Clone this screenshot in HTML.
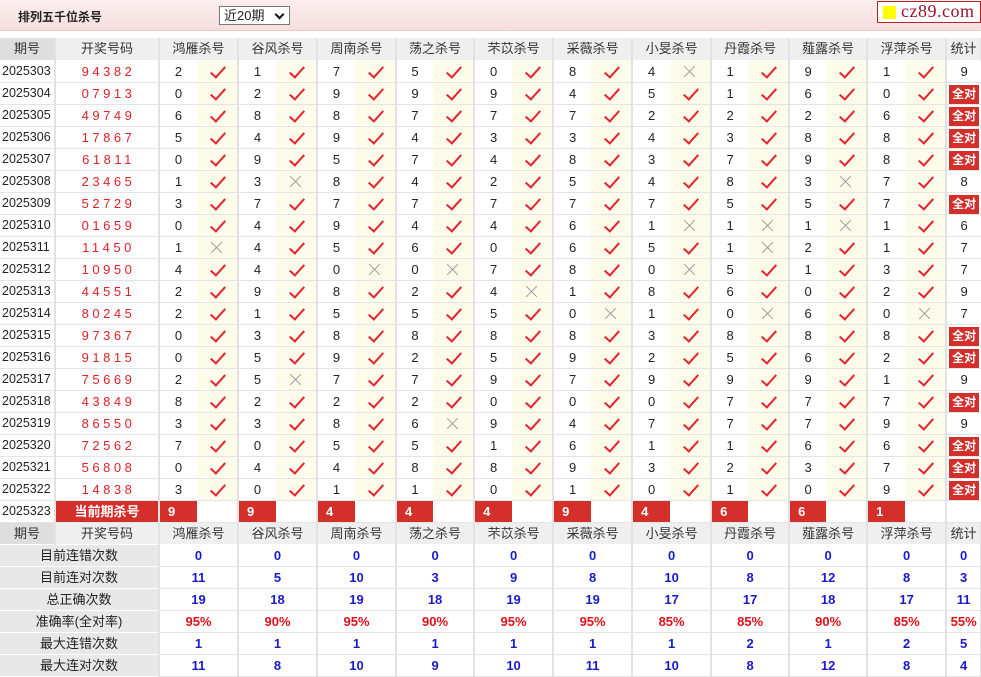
<!DOCTYPE html>
<html><head><meta charset="utf-8">
<style>
*{margin:0;padding:0;box-sizing:border-box}
body{width:981px;height:677px;background:#fff;font-family:"Liberation Sans","Noto Sans CJK SC",sans-serif;font-size:13px;color:#222;overflow:hidden;position:relative}
.top{position:absolute;left:0;top:0;width:981px;height:31px;background:linear-gradient(#fbeeee,#f6dede);border-bottom:1px solid #ecc9c9}
.ttl{position:absolute;left:18px;top:8px;font-size:12px;font-weight:bold;color:#222}
.sel{position:absolute;left:219px;top:6px;width:71px;height:19px;border:1px solid #777;background:#fff;font-size:13px;line-height:17px;padding-left:4px}
.sel:after{content:"";position:absolute;right:6px;top:4px;width:5px;height:5px;border-right:2px solid #111;border-bottom:2px solid #111;transform:rotate(45deg)}
.logo{position:absolute;left:877px;top:1px;width:104px;height:22px;border:1px solid #b22;background:#fff;font-family:"Liberation Serif",serif;font-size:18px;color:#a0102a;line-height:19px;padding-left:23px;letter-spacing:0.5px}
.logo:before{content:"";position:absolute;left:5px;top:4px;width:13px;height:13px;background:#ff0}
table{position:absolute;left:0;top:38px;border-collapse:collapse;table-layout:fixed;width:981px}
td{height:22px;border-bottom:1px solid #e4e4e4;text-align:center;white-space:nowrap;padding:0;line-height:21px}
td.p{text-align:left;padding-left:2px;font-size:12.5px;border-right:2px solid #e2e2e2}
td.d{color:#e0202a;letter-spacing:3.5px;padding-left:3px;border-right:2px solid #e2e2e2}
td.y,td.n{background:#fdfbea;border-right:2px solid #e2e2e2;position:relative}
td.y:after{content:"";position:absolute;left:17px;top:2px;width:6px;height:13px;border-right:2px solid #e42530;border-bottom:2px solid #e42530;transform:rotate(42deg)}
td.n:before,td.n:after{content:"";position:absolute;left:12px;top:10px;width:15px;height:1px;background:#999;transform:rotate(45deg)}
td.n:after{transform:rotate(-45deg)}
.q{display:inline-block;background:#d42f2b;color:#fff;font-weight:bold;font-size:12px;line-height:19px;padding:0 3px;margin-top:1px}
tr.h td{background:#efefef;color:#333;border-right:2px solid #e2e2e2;border-bottom:1px solid #fff}
tr.h td.ph{background:#dedede}
tr.c td.r{background:#d42f2b;color:#fff;font-weight:bold;text-align:left;padding-left:8px;border-right:0}
tr.c td.dr{background:#d42f2b;color:#fff;font-weight:bold;text-align:center;border-right:2px solid #e2e2e2}
tr.c td.w{border-right:2px solid #e2e2e2}
tr.st td.l{background:#e8e8e8;border-bottom:1px solid #fff;border-right:2px solid #e2e2e2}
tr.st td.v{color:#1a1acc;font-weight:bold;border-right:2px solid #e2e2e2}
tr.st td.v.rd{color:#e0101a}
</style></head><body>
<div class="top"><div class="ttl">排列五千位杀号</div><div class="sel">近20期</div><div class="logo">cz89.com</div></div>
<table>
<colgroup><col style="width:55px"><col style="width:104px">
<col style="width:38px"><col style="width:41px"><col style="width:38px"><col style="width:41px"><col style="width:38px"><col style="width:41px"><col style="width:37px"><col style="width:41px"><col style="width:38px"><col style="width:41px"><col style="width:38px"><col style="width:41px"><col style="width:38px"><col style="width:41px"><col style="width:37px"><col style="width:41px"><col style="width:37px"><col style="width:41px"><col style="width:38px"><col style="width:41px"><col style="width:35px"></colgroup>
<tr class="h"><td class="ph">期号</td><td>开奖号码</td><td colspan="2">鸿雁杀号</td><td colspan="2">谷风杀号</td><td colspan="2">周南杀号</td><td colspan="2">荡之杀号</td><td colspan="2">芣苡杀号</td><td colspan="2">采薇杀号</td><td colspan="2">小旻杀号</td><td colspan="2">丹霞杀号</td><td colspan="2">薤露杀号</td><td colspan="2">浮萍杀号</td><td>统计</td></tr>
<tr><td class="p">2025303</td><td class="d">94382</td><td>2</td><td class="y"></td><td>1</td><td class="y"></td><td>7</td><td class="y"></td><td>5</td><td class="y"></td><td>0</td><td class="y"></td><td>8</td><td class="y"></td><td>4</td><td class="n"></td><td>1</td><td class="y"></td><td>9</td><td class="y"></td><td>1</td><td class="y"></td><td>9</td></tr>
<tr><td class="p">2025304</td><td class="d">07913</td><td>0</td><td class="y"></td><td>2</td><td class="y"></td><td>9</td><td class="y"></td><td>9</td><td class="y"></td><td>9</td><td class="y"></td><td>4</td><td class="y"></td><td>5</td><td class="y"></td><td>1</td><td class="y"></td><td>6</td><td class="y"></td><td>0</td><td class="y"></td><td><span class="q">全对</span></td></tr>
<tr><td class="p">2025305</td><td class="d">49749</td><td>6</td><td class="y"></td><td>8</td><td class="y"></td><td>8</td><td class="y"></td><td>7</td><td class="y"></td><td>7</td><td class="y"></td><td>7</td><td class="y"></td><td>2</td><td class="y"></td><td>2</td><td class="y"></td><td>2</td><td class="y"></td><td>6</td><td class="y"></td><td><span class="q">全对</span></td></tr>
<tr><td class="p">2025306</td><td class="d">17867</td><td>5</td><td class="y"></td><td>4</td><td class="y"></td><td>9</td><td class="y"></td><td>4</td><td class="y"></td><td>3</td><td class="y"></td><td>3</td><td class="y"></td><td>4</td><td class="y"></td><td>3</td><td class="y"></td><td>8</td><td class="y"></td><td>8</td><td class="y"></td><td><span class="q">全对</span></td></tr>
<tr><td class="p">2025307</td><td class="d">61811</td><td>0</td><td class="y"></td><td>9</td><td class="y"></td><td>5</td><td class="y"></td><td>7</td><td class="y"></td><td>4</td><td class="y"></td><td>8</td><td class="y"></td><td>3</td><td class="y"></td><td>7</td><td class="y"></td><td>9</td><td class="y"></td><td>8</td><td class="y"></td><td><span class="q">全对</span></td></tr>
<tr><td class="p">2025308</td><td class="d">23465</td><td>1</td><td class="y"></td><td>3</td><td class="n"></td><td>8</td><td class="y"></td><td>4</td><td class="y"></td><td>2</td><td class="y"></td><td>5</td><td class="y"></td><td>4</td><td class="y"></td><td>8</td><td class="y"></td><td>3</td><td class="n"></td><td>7</td><td class="y"></td><td>8</td></tr>
<tr><td class="p">2025309</td><td class="d">52729</td><td>3</td><td class="y"></td><td>7</td><td class="y"></td><td>7</td><td class="y"></td><td>7</td><td class="y"></td><td>7</td><td class="y"></td><td>7</td><td class="y"></td><td>7</td><td class="y"></td><td>5</td><td class="y"></td><td>5</td><td class="y"></td><td>7</td><td class="y"></td><td><span class="q">全对</span></td></tr>
<tr><td class="p">2025310</td><td class="d">01659</td><td>0</td><td class="y"></td><td>4</td><td class="y"></td><td>9</td><td class="y"></td><td>4</td><td class="y"></td><td>4</td><td class="y"></td><td>6</td><td class="y"></td><td>1</td><td class="n"></td><td>1</td><td class="n"></td><td>1</td><td class="n"></td><td>1</td><td class="y"></td><td>6</td></tr>
<tr><td class="p">2025311</td><td class="d">11450</td><td>1</td><td class="n"></td><td>4</td><td class="y"></td><td>5</td><td class="y"></td><td>6</td><td class="y"></td><td>0</td><td class="y"></td><td>6</td><td class="y"></td><td>5</td><td class="y"></td><td>1</td><td class="n"></td><td>2</td><td class="y"></td><td>1</td><td class="y"></td><td>7</td></tr>
<tr><td class="p">2025312</td><td class="d">10950</td><td>4</td><td class="y"></td><td>4</td><td class="y"></td><td>0</td><td class="n"></td><td>0</td><td class="n"></td><td>7</td><td class="y"></td><td>8</td><td class="y"></td><td>0</td><td class="n"></td><td>5</td><td class="y"></td><td>1</td><td class="y"></td><td>3</td><td class="y"></td><td>7</td></tr>
<tr><td class="p">2025313</td><td class="d">44551</td><td>2</td><td class="y"></td><td>9</td><td class="y"></td><td>8</td><td class="y"></td><td>2</td><td class="y"></td><td>4</td><td class="n"></td><td>1</td><td class="y"></td><td>8</td><td class="y"></td><td>6</td><td class="y"></td><td>0</td><td class="y"></td><td>2</td><td class="y"></td><td>9</td></tr>
<tr><td class="p">2025314</td><td class="d">80245</td><td>2</td><td class="y"></td><td>1</td><td class="y"></td><td>5</td><td class="y"></td><td>5</td><td class="y"></td><td>5</td><td class="y"></td><td>0</td><td class="n"></td><td>1</td><td class="y"></td><td>0</td><td class="n"></td><td>6</td><td class="y"></td><td>0</td><td class="n"></td><td>7</td></tr>
<tr><td class="p">2025315</td><td class="d">97367</td><td>0</td><td class="y"></td><td>3</td><td class="y"></td><td>8</td><td class="y"></td><td>8</td><td class="y"></td><td>8</td><td class="y"></td><td>8</td><td class="y"></td><td>3</td><td class="y"></td><td>8</td><td class="y"></td><td>8</td><td class="y"></td><td>8</td><td class="y"></td><td><span class="q">全对</span></td></tr>
<tr><td class="p">2025316</td><td class="d">91815</td><td>0</td><td class="y"></td><td>5</td><td class="y"></td><td>9</td><td class="y"></td><td>2</td><td class="y"></td><td>5</td><td class="y"></td><td>9</td><td class="y"></td><td>2</td><td class="y"></td><td>5</td><td class="y"></td><td>6</td><td class="y"></td><td>2</td><td class="y"></td><td><span class="q">全对</span></td></tr>
<tr><td class="p">2025317</td><td class="d">75669</td><td>2</td><td class="y"></td><td>5</td><td class="n"></td><td>7</td><td class="y"></td><td>7</td><td class="y"></td><td>9</td><td class="y"></td><td>7</td><td class="y"></td><td>9</td><td class="y"></td><td>9</td><td class="y"></td><td>9</td><td class="y"></td><td>1</td><td class="y"></td><td>9</td></tr>
<tr><td class="p">2025318</td><td class="d">43849</td><td>8</td><td class="y"></td><td>2</td><td class="y"></td><td>2</td><td class="y"></td><td>2</td><td class="y"></td><td>0</td><td class="y"></td><td>0</td><td class="y"></td><td>0</td><td class="y"></td><td>7</td><td class="y"></td><td>7</td><td class="y"></td><td>7</td><td class="y"></td><td><span class="q">全对</span></td></tr>
<tr><td class="p">2025319</td><td class="d">86550</td><td>3</td><td class="y"></td><td>3</td><td class="y"></td><td>8</td><td class="y"></td><td>6</td><td class="n"></td><td>9</td><td class="y"></td><td>4</td><td class="y"></td><td>7</td><td class="y"></td><td>7</td><td class="y"></td><td>7</td><td class="y"></td><td>9</td><td class="y"></td><td>9</td></tr>
<tr><td class="p">2025320</td><td class="d">72562</td><td>7</td><td class="y"></td><td>0</td><td class="y"></td><td>5</td><td class="y"></td><td>5</td><td class="y"></td><td>1</td><td class="y"></td><td>6</td><td class="y"></td><td>1</td><td class="y"></td><td>1</td><td class="y"></td><td>6</td><td class="y"></td><td>6</td><td class="y"></td><td><span class="q">全对</span></td></tr>
<tr><td class="p">2025321</td><td class="d">56808</td><td>0</td><td class="y"></td><td>4</td><td class="y"></td><td>4</td><td class="y"></td><td>8</td><td class="y"></td><td>8</td><td class="y"></td><td>9</td><td class="y"></td><td>3</td><td class="y"></td><td>2</td><td class="y"></td><td>3</td><td class="y"></td><td>7</td><td class="y"></td><td><span class="q">全对</span></td></tr>
<tr><td class="p">2025322</td><td class="d">14838</td><td>3</td><td class="y"></td><td>0</td><td class="y"></td><td>1</td><td class="y"></td><td>1</td><td class="y"></td><td>0</td><td class="y"></td><td>1</td><td class="y"></td><td>0</td><td class="y"></td><td>1</td><td class="y"></td><td>0</td><td class="y"></td><td>9</td><td class="y"></td><td><span class="q">全对</span></td></tr>
<tr class="c"><td class="p">2025323</td><td class="dr">当前期杀号</td><td class="r">9</td><td class="w"></td><td class="r">9</td><td class="w"></td><td class="r">4</td><td class="w"></td><td class="r">4</td><td class="w"></td><td class="r">4</td><td class="w"></td><td class="r">9</td><td class="w"></td><td class="r">4</td><td class="w"></td><td class="r">6</td><td class="w"></td><td class="r">6</td><td class="w"></td><td class="r">1</td><td class="w"></td><td></td></tr>
<tr class="h"><td class="ph">期号</td><td>开奖号码</td><td colspan="2">鸿雁杀号</td><td colspan="2">谷风杀号</td><td colspan="2">周南杀号</td><td colspan="2">荡之杀号</td><td colspan="2">芣苡杀号</td><td colspan="2">采薇杀号</td><td colspan="2">小旻杀号</td><td colspan="2">丹霞杀号</td><td colspan="2">薤露杀号</td><td colspan="2">浮萍杀号</td><td>统计</td></tr>
<tr class="st"><td class="l" colspan="2">目前连错次数</td><td class="v" colspan="2">0</td><td class="v" colspan="2">0</td><td class="v" colspan="2">0</td><td class="v" colspan="2">0</td><td class="v" colspan="2">0</td><td class="v" colspan="2">0</td><td class="v" colspan="2">0</td><td class="v" colspan="2">0</td><td class="v" colspan="2">0</td><td class="v" colspan="2">0</td><td class="v">0</td></tr>
<tr class="st"><td class="l" colspan="2">目前连对次数</td><td class="v" colspan="2">11</td><td class="v" colspan="2">5</td><td class="v" colspan="2">10</td><td class="v" colspan="2">3</td><td class="v" colspan="2">9</td><td class="v" colspan="2">8</td><td class="v" colspan="2">10</td><td class="v" colspan="2">8</td><td class="v" colspan="2">12</td><td class="v" colspan="2">8</td><td class="v">3</td></tr>
<tr class="st"><td class="l" colspan="2">总正确次数</td><td class="v" colspan="2">19</td><td class="v" colspan="2">18</td><td class="v" colspan="2">19</td><td class="v" colspan="2">18</td><td class="v" colspan="2">19</td><td class="v" colspan="2">19</td><td class="v" colspan="2">17</td><td class="v" colspan="2">17</td><td class="v" colspan="2">18</td><td class="v" colspan="2">17</td><td class="v">11</td></tr>
<tr class="st"><td class="l" colspan="2">准确率(全对率)</td><td class="v rd" colspan="2">95%</td><td class="v rd" colspan="2">90%</td><td class="v rd" colspan="2">95%</td><td class="v rd" colspan="2">90%</td><td class="v rd" colspan="2">95%</td><td class="v rd" colspan="2">95%</td><td class="v rd" colspan="2">85%</td><td class="v rd" colspan="2">85%</td><td class="v rd" colspan="2">90%</td><td class="v rd" colspan="2">85%</td><td class="v rd">55%</td></tr>
<tr class="st"><td class="l" colspan="2">最大连错次数</td><td class="v" colspan="2">1</td><td class="v" colspan="2">1</td><td class="v" colspan="2">1</td><td class="v" colspan="2">1</td><td class="v" colspan="2">1</td><td class="v" colspan="2">1</td><td class="v" colspan="2">1</td><td class="v" colspan="2">2</td><td class="v" colspan="2">1</td><td class="v" colspan="2">2</td><td class="v">5</td></tr>
<tr class="st"><td class="l" colspan="2">最大连对次数</td><td class="v" colspan="2">11</td><td class="v" colspan="2">8</td><td class="v" colspan="2">10</td><td class="v" colspan="2">9</td><td class="v" colspan="2">10</td><td class="v" colspan="2">11</td><td class="v" colspan="2">10</td><td class="v" colspan="2">8</td><td class="v" colspan="2">12</td><td class="v" colspan="2">8</td><td class="v">4</td></tr>
</table>
</body></html>
